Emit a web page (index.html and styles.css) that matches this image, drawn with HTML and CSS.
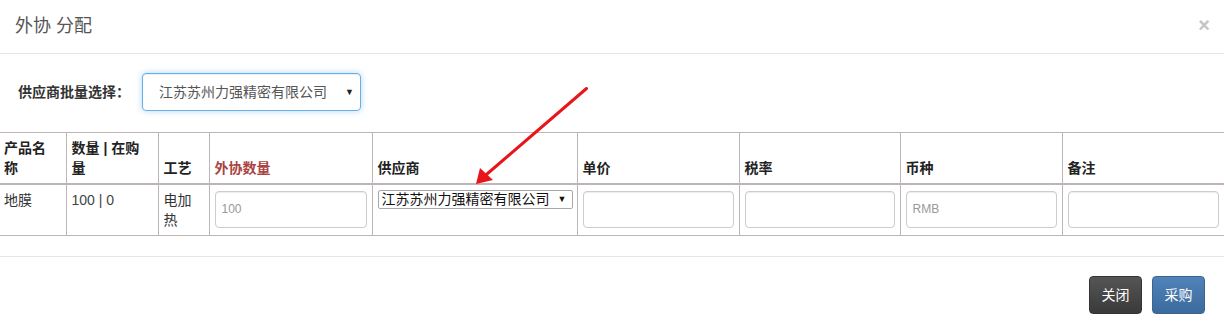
FILE: index.html
```html
<!DOCTYPE html>
<html lang="zh-CN">
<head>
<meta charset="utf-8">
<title>外协 分配</title>
<link rel="stylesheet" href="styles.css">
</head>
<body>
<div class="modal">
  <div class="modal-header">
    <h4 class="modal-title">外协 分配</h4>
    <span class="close">×</span>
  </div>
  <div class="modal-body">
    <div class="batch-row">
      <label class="batch-label">供应商批量选择：</label>
      <div class="batch-select">
        <span>江苏苏州力强精密有限公司</span>
        <span class="caret">▼</span>
      </div>
    </div>
    <table class="grid">
      <colgroup>
        <col class="c1"><col class="c2"><col class="c3"><col class="c4"><col class="c5">
        <col class="c6"><col class="c7"><col class="c8"><col class="c9">
      </colgroup>
      <thead>
        <tr>
          <th>产品名称</th>
          <th>数量 | 在购量</th>
          <th>工艺</th>
          <th class="danger">外协数量</th>
          <th>供应商</th>
          <th>单价</th>
          <th>税率</th>
          <th>币种</th>
          <th>备注</th>
        </tr>
      </thead>
      <tbody>
        <tr>
          <td>地膜</td>
          <td class="num">100 | 0</td>
          <td>电加热</td>
          <td><div class="input placeholder">100</div></td>
          <td><div class="mini-select"><span>江苏苏州力强精密有限公司</span><span class="mini-caret">▼</span></div></td>
          <td><div class="input"></div></td>
          <td><div class="input"></div></td>
          <td><div class="input placeholder">RMB</div></td>
          <td><div class="input"></div></td>
        </tr>
      </tbody>
    </table>
  </div>
  <div class="modal-footer">
    <button class="btn btn-dark">关闭</button>
    <button class="btn btn-blue">采购</button>
  </div>
  <svg class="arrow" width="1224" height="330" viewBox="0 0 1224 330">
    <line x1="586.5" y1="88.5" x2="487" y2="174" stroke="#e8161b" stroke-width="3" stroke-linecap="round"/>
    <polygon points="476,184 480,168 493,180" fill="#e8161b"/>
  </svg>
</div>
</body>
</html>
```

FILE: styles.css
```css
* { box-sizing: border-box; }
html, body {
  margin: 0;
  padding: 0;
  background: #fff;
}
body {
  font-family: "Liberation Sans", "Noto Sans CJK SC", sans-serif;
  font-size: 14px;
  line-height: 20px;
  color: #333;
}
.modal {
  position: relative;
  width: 1224px;
  height: 330px;
  overflow: hidden;
}
.modal-header {
  display: flex;
  align-items: flex-start;
  justify-content: space-between;
  padding: 15px 14px 15px 15px;
  height: 54px;
  border-bottom: 1px solid #e5e5e5;
}
.modal-title {
  margin: 0;
  font-size: 18px;
  line-height: 22px;
  font-weight: normal;
  color: #555;
}
.close {
  font-size: 20px;
  line-height: 14px;
  font-weight: bold;
  color: #c4c4c4;
  margin-top: 3px;
}
.modal-body {
  padding: 19px 0 20px 0;
}
.batch-row {
  display: flex;
  align-items: center;
  padding-left: 18px;
  margin-bottom: 21px;
}
.batch-label {
  font-weight: bold;
  color: #333;
  width: 124px;
}
.batch-select {
  display: flex;
  align-items: center;
  justify-content: space-between;
  width: 219px;
  height: 38px;
  padding: 0 6px 0 16px;
  border: 1px solid #66afe9;
  border-radius: 4px;
  box-shadow: inset 0 1px 1px rgba(0,0,0,.075), 0 0 6px rgba(102,175,233,.5);
  color: #555;
}
.caret {
  font-size: 9px;
  color: #222;
}
.grid {
  width: 1224px;
  border-collapse: collapse;
  table-layout: fixed;
  border-top: 1px solid #bdb6b6;
  border-bottom: 1px solid #bdb6b6;
}
.c1 { width: 66px; }
.c2 { width: 92px; }
.c3 { width: 51px; }
.c4 { width: 163px; }
.c5 { width: 205px; }
.c6 { width: 162px; }
.c7 { width: 161px; }
.c8 { width: 162px; }
.c9 { width: 162px; }
.grid th, .grid td {
  padding: 5px 5px 5px 5px;
  border-left: 1px solid #bdb6b6;
  text-align: left;
}
.grid th:first-child, .grid td:first-child {
  border-left: none;
  padding-left: 4px;
  padding-right: 10px;
}
.grid th {
  vertical-align: bottom;
  font-weight: bold;
  color: #222;
  border-bottom: 2px solid #bdb6b6;
}
.grid th.danger {
  color: #a94442;
}
.grid td {
  vertical-align: top;
  height: 50px;
}
.grid td.num {
  color: #444;
}
.input {
  height: 37px;
  margin-top: 1px;
  border: 1px solid #ccc;
  border-radius: 4px;
  box-shadow: inset 0 1px 1px rgba(0,0,0,.075);
  padding: 0 6px;
  font-size: 12px;
  line-height: 35px;
}
.placeholder {
  color: #999;
}
.mini-select {
  display: flex;
  align-items: center;
  justify-content: space-between;
  width: 195px;
  height: 19px;
  border: 1px solid #a9a9a9;
  border-radius: 2px;
  padding: 0 5px 0 3px;
  color: #111;
  font-size: 14px;
  line-height: 17px;
}
.mini-caret {
  font-size: 9px;
  color: #111;
}
.modal-footer {
  display: flex;
  justify-content: flex-end;
  gap: 10px;
  padding: 19px 19px 15px;
  border-top: 1px solid #e5e5e5;
}
.btn {
  font-family: "Liberation Sans", "Noto Sans CJK SC", sans-serif;
  font-size: 14px;
  line-height: 20px;
  height: 38px;
  width: 53px;
  padding: 0;
  border-radius: 4px;
  color: #fff;
  cursor: pointer;
}
.btn-dark {
  background: linear-gradient(#555, #3a3a3a);
  border: 1px solid #333;
}
.btn-blue {
  background: linear-gradient(#5083b8, #3c6a9d);
  border: 1px solid #3a6592;
}
.arrow {
  position: absolute;
  left: 0;
  top: 0;
  pointer-events: none;
}
```
